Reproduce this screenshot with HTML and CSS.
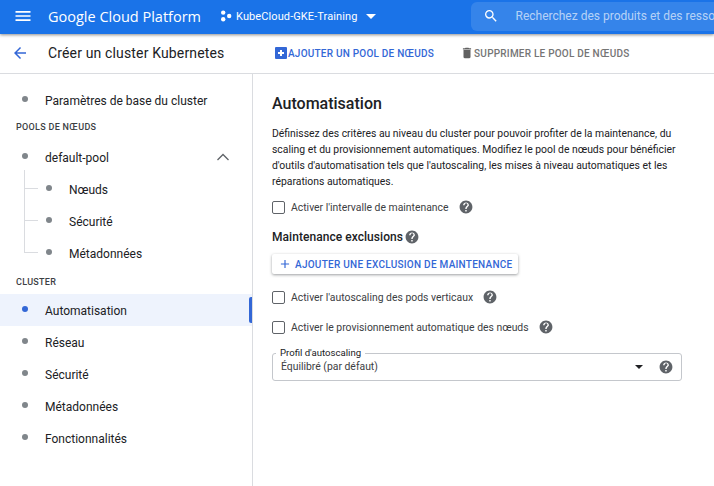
FILE: index.html
```html
<!DOCTYPE html>
<html lang="fr">
<head>
    <meta charset="UTF-8">
    <meta name="viewport" content="width=device-width, initial-scale=1.0">
    <title>Créer un cluster Kubernetes</title>
    <link rel="stylesheet" href="styles.css">
</head>
<body>
    <header class="topbar">
        <svg class="menu-icon" width="20" height="20" viewBox="0 0 24 24"><path d="M3 18h18v-2H3v2zm0-5h18v-2H3v2zm0-7v2h18V6H3z" fill="#fff"/></svg>
        <span class="brand">Google Cloud Platform</span>
        <svg class="project-icon" width="12" height="12" viewBox="0 0 12 12"><circle cx="3.2" cy="2.6" r="2.2" fill="#fff"/><circle cx="3.2" cy="9.2" r="2.2" fill="#fff"/><circle cx="9.2" cy="6" r="2.2" fill="#fff"/></svg>
        <span class="project">KubeCloud-GKE-Training</span>
        <span class="caret caret-white"></span>
        <div class="search">
            <svg width="16" height="16" viewBox="0 0 24 24"><path d="M15.5 14h-.79l-.28-.27A6.47 6.47 0 0 0 16 9.5 6.5 6.5 0 1 0 9.5 16c1.61 0 3.09-.59 4.23-1.57l.27.28v.79l5 4.99L20.49 19l-4.99-5zm-6 0C7.01 14 5 11.99 5 9.5S7.01 5 9.5 5 14 7.01 14 9.5 11.99 14 9.5 14z" fill="#fff"/></svg>
            <span class="search-text">Recherchez des produits et des ressources</span>
        </div>
    </header>

    <div class="toolbar">
        <svg class="back" width="18" height="18" viewBox="0 0 24 24"><path d="M20 11H7.83l5.59-5.59L12 4l-8 8 8 8 1.41-1.41L7.83 13H20v-2z" fill="#3367d6"/></svg>
        <h1>Créer un cluster Kubernetes</h1>
        <button class="tool tool-add">
            <svg width="14" height="14" viewBox="0 0 14 14"><path d="M2 1h10a1 1 0 0 1 1 1v10a1 1 0 0 1-1 1H2a1 1 0 0 1-1-1V2a1 1 0 0 1 1-1zm4 3v2H4v2h2v2h2V8h2V6H8V4H6z" fill="#3367d6" fill-rule="evenodd"/></svg>
            AJOUTER UN POOL DE NŒUDS
        </button>
        <button class="tool tool-del">
            <svg width="14" height="14" viewBox="0 0 24 24"><path d="M6 19c0 1.1.9 2 2 2h8c1.100 0 2-.9 2-2V7H6v12zM19 4h-3.500l-1-1h-5l-1 1H5v2h14V4z" fill="#616161"/></svg>
            SUPPRIMER LE POOL DE NŒUDS
        </button>
    </div>

    <div class="main">
        <nav class="sidebar">
            <a class="item"><i class="dot"></i>Paramètres de base du cluster</a>
            <div class="section">POOLS DE NŒUDS</div>
            <a class="item"><i class="dot"></i>default-pool
                <svg class="chevron" width="14" height="14" viewBox="0 0 14 14"><path d="M1.500 10L7 4.500 12.500 10" fill="none" stroke="#5f6368" stroke-width="1.300"/></svg>
            </a>
            <div class="tree">
                <a class="item sub"><i class="dot"></i>Nœuds</a>
                <a class="item sub"><i class="dot"></i>Sécurité</a>
                <a class="item sub"><i class="dot"></i>Métadonnées</a>
            </div>
            <div class="section section-cluster">CLUSTER</div>
            <a class="item active"><i class="dot"></i>Automatisation</a>
            <a class="item"><i class="dot"></i>Réseau</a>
            <a class="item"><i class="dot"></i>Sécurité</a>
            <a class="item"><i class="dot"></i>Métadonnées</a>
            <a class="item"><i class="dot"></i>Fonctionnalités</a>
        </nav>

        <section class="content">
            <h2>Automatisation</h2>
            <p class="intro">Définissez des critères au niveau du cluster pour pouvoir profiter de la maintenance, du scaling et du provisionnement automatiques. Modifiez le pool de nœuds pour bénéficier d'outils d'automatisation tels que l'autoscaling, les mises à niveau automatiques et les réparations automatiques.</p>

            <label class="check check-first"><span class="box"></span>Activer l'intervalle de maintenance
                <svg class="help" width="14" height="14" viewBox="0 0 24 24"><use href="#help"/></svg></label>

            <h3>Maintenance exclusions
                <svg class="help" width="14" height="14" viewBox="0 0 24 24"><use href="#help"/></svg></h3>

            <button class="raised">
                <svg width="14" height="14" viewBox="0 0 24 24"><path d="M19 13h-6v6h-2v-6H5v-2h6V5h2v6h6v2z" fill="#3367d6"/></svg>
                AJOUTER UNE EXCLUSION DE MAINTENANCE
            </button>

            <label class="check check-next"><span class="box"></span>Activer l'autoscaling des pods verticaux
                <svg class="help" width="14" height="14" viewBox="0 0 24 24"><use href="#help"/></svg></label>
            <label class="check check-next"><span class="box"></span>Activer le provisionnement automatique des nœuds
                <svg class="help" width="14" height="14" viewBox="0 0 24 24"><use href="#help"/></svg></label>

            <div class="select">
                <span class="select-label">Profil d'autoscaling</span>
                <span class="select-value">Équilibré (par défaut)</span>
                <span class="caret caret-dark"></span>
                <svg width="14" height="14" viewBox="0 0 24 24"><use href="#help"/></svg>
            </div>
        </section>
    </div>

    <svg class="defs" width="0" height="0"><defs><path id="help" d="M12 1C5.930 1 1 5.930 1 12s4.930 11 11 11 11-4.930 11-11S18.070 1 12 1zm1.200 18.500h-2.500V17h2.500v2.500zm2.700-8.600l-1.100 1.100c-.9.900-1.500 1.600-1.500 3.300h-2.500v-.6c0-1.300.6-2.500 1.500-3.400l1.500-1.500c.5-.4.7-1 .7-1.700 0-1.300-1.100-2.400-2.500-2.400S9.500 7.800 9.500 9.200H7c0-2.800 2.200-5 5-5s5 2.200 5 5c0 .7-.4 1.300-1.100 1.700z" fill="#5f6368" fill-rule="evenodd"/></defs></svg>
</body>
</html>
```

FILE: styles.css
```css
* {
    box-sizing: border-box;
}
body {
    margin: 0;
    height: 486px;
    overflow: hidden;
    font-family: Roboto, Arial, sans-serif;
    color: #202124;
    background-color: #fff;
    display: flex;
    flex-direction: column;
}
.defs {
    position: absolute;
}
.topbar {
    height: 34px;
    flex: none;
    background-color: #1a73e8;
    box-shadow: 0 1px 3px rgba(0,0,0,0.45);
    display: flex;
    align-items: center;
    padding: 0 0 2px 13px;
    color: #fff;
    position: relative;
    overflow: hidden;
    z-index: 2;
}
.topbar > * {
    flex: none;
}
.brand {
    margin-left: 15px;
    font-family: "Open Sans", Arial, sans-serif;
    font-size: 14.5px;
    width: 172px;
    white-space: nowrap;
}
.project {
    margin-left: 4px;
    font-size: 11px;
    letter-spacing: 0.1px;
    white-space: nowrap;
}
.caret {
    width: 0;
    height: 0;
    border-left: 5px solid transparent;
    border-right: 5px solid transparent;
}
.caret-white {
    margin-left: 8px;
    border-top: 5px solid #fff;
}
.search {
    margin-left: 95px;
    width: 244px;
    height: 29px;
    overflow: hidden;
    background-color: rgba(255,255,255,0.12);
    border-radius: 6px 0 0 6px;
    display: flex;
    align-items: center;
    padding-left: 12px;
}
.search svg {
    flex: none;
}
.search-text {
    margin-left: 17px;
    font-size: 12px;
    color: rgba(255,255,255,0.65);
    white-space: nowrap;
}
.toolbar {
    height: 40px;
    flex: none;
    border-bottom: 1px solid #dadce0;
    display: flex;
    align-items: center;
    padding: 0 0 1px 11px;
}
.toolbar h1 {
    margin: 0 0 0 19px;
    width: 226px;
    font-size: 14px;
    font-weight: 400;
    letter-spacing: 0.15px;
    white-space: nowrap;
}
.tool {
    border: none;
    background: none;
    padding: 0;
    display: flex;
    align-items: center;
    font-family: Roboto, Arial, sans-serif;
    font-size: 10px;
    font-weight: 500;
    letter-spacing: 0.22px;
    white-space: nowrap;
}
.tool-add {
    color: #3367d6;
}
.tool-del {
    margin-left: 26px;
    color: #757575;
}
.main {
    flex: 1;
    display: flex;
    min-height: 0;
}
.sidebar {
    width: 253px;
    flex: none;
    border-right: 1px solid #dadce0;
    padding-top: 10px;
}
.item {
    height: 32px;
    display: flex;
    align-items: center;
    font-size: 12px;
    position: relative;
    padding: 1px 0 0 45px;
}
.dot {
    position: absolute;
    left: 22px;
    top: 12px;
    width: 6px;
    height: 6px;
    border-radius: 50%;
    background-color: #80868b;
}
.section {
    height: 25px;
    padding-top: 6px;
    padding-left: 16px;
    font-size: 9px;
    font-weight: 500;
    letter-spacing: 0.3px;
    color: #3c4043;
}
.section-cluster {
    padding-top: 8px;
}
.chevron {
    position: absolute;
    left: 216px;
    top: 9px;
}
.tree {
    position: relative;
}
.tree::before {
    content: "";
    position: absolute;
    left: 24px;
    top: -3px;
    bottom: 16px;
    width: 1px;
    background-color: #dadce0;
}
.sub {
    padding-left: 69px;
}
.sub .dot {
    left: 46px;
}
.sub::before {
    content: "";
    position: absolute;
    left: 24px;
    top: 15px;
    width: 14px;
    height: 1px;
    background-color: #dadce0;
}
.active {
    background-color: #eef3fd;
}
.active .dot {
    background-color: #3367d6;
}
.active::after {
    content: "";
    position: absolute;
    right: 0;
    top: 3px;
    width: 3px;
    height: 26px;
    background-color: #3367d6;
    border-radius: 2px 0 0 2px;
}
.content {
    flex: 1;
    padding: 19px 0 0 19px;
    min-width: 0;
}
.content h2 {
    margin: 0;
    font-size: 16px;
    font-weight: 500;
    line-height: 22px;
}
.intro {
    margin: 11px 0 0;
    width: 410px;
    font-size: 10.4px;
    line-height: 16px;
    color: #202124;
}
.check {
    display: flex;
    align-items: center;
    font-size: 10.4px;
    color: #3c4043;
}
.check-first {
    margin-top: 10px;
}
.check-first .box {
    margin-top: 1px;
}
.check-next {
    margin-top: 16px;
}
.box {
    width: 13px;
    height: 13px;
    border: 1px solid #5f6368;
    border-radius: 2px;
    margin-right: 6px;
    flex: none;
}
.help {
    margin-left: 10px;
    flex: none;
}
.content h3 {
    margin: 16px 0 0;
    font-size: 12px;
    font-weight: 500;
    letter-spacing: 0.05px;
    display: flex;
    align-items: center;
}
.content h3 .help {
    margin-left: 2px;
}
.raised {
    margin-top: 10px;
    height: 20px;
    width: 246px;
    border: none;
    border-radius: 2px;
    background-color: #fff;
    box-shadow: 0 1px 3px rgba(60,64,67,0.5);
    display: flex;
    align-items: center;
    gap: 3px;
    padding: 0 0 0 6px;
    color: #3367d6;
    font-family: Roboto, Arial, sans-serif;
    font-size: 10px;
    font-weight: 500;
    letter-spacing: 0.26px;
    white-space: nowrap;
}
.select {
    position: relative;
    margin-top: 19px;
    width: 410px;
    height: 28px;
    border: 1px solid #c4c7cc;
    border-radius: 3px;
    display: flex;
    align-items: center;
    padding: 0 8px 1px;
    font-size: 10.4px;
    color: #3c4043;
}
.select-label {
    position: absolute;
    left: 3px;
    top: -7px;
    padding: 0 4px;
    background-color: #fff;
    font-size: 9.6px;
    line-height: 11px;
    color: #202124;
}
.select-value {
    flex: 1;
}
.caret-dark {
    border-left-width: 4px;
    border-right-width: 4px;
    border-top: 4px solid #202124;
    margin-right: 16px;
}
```
